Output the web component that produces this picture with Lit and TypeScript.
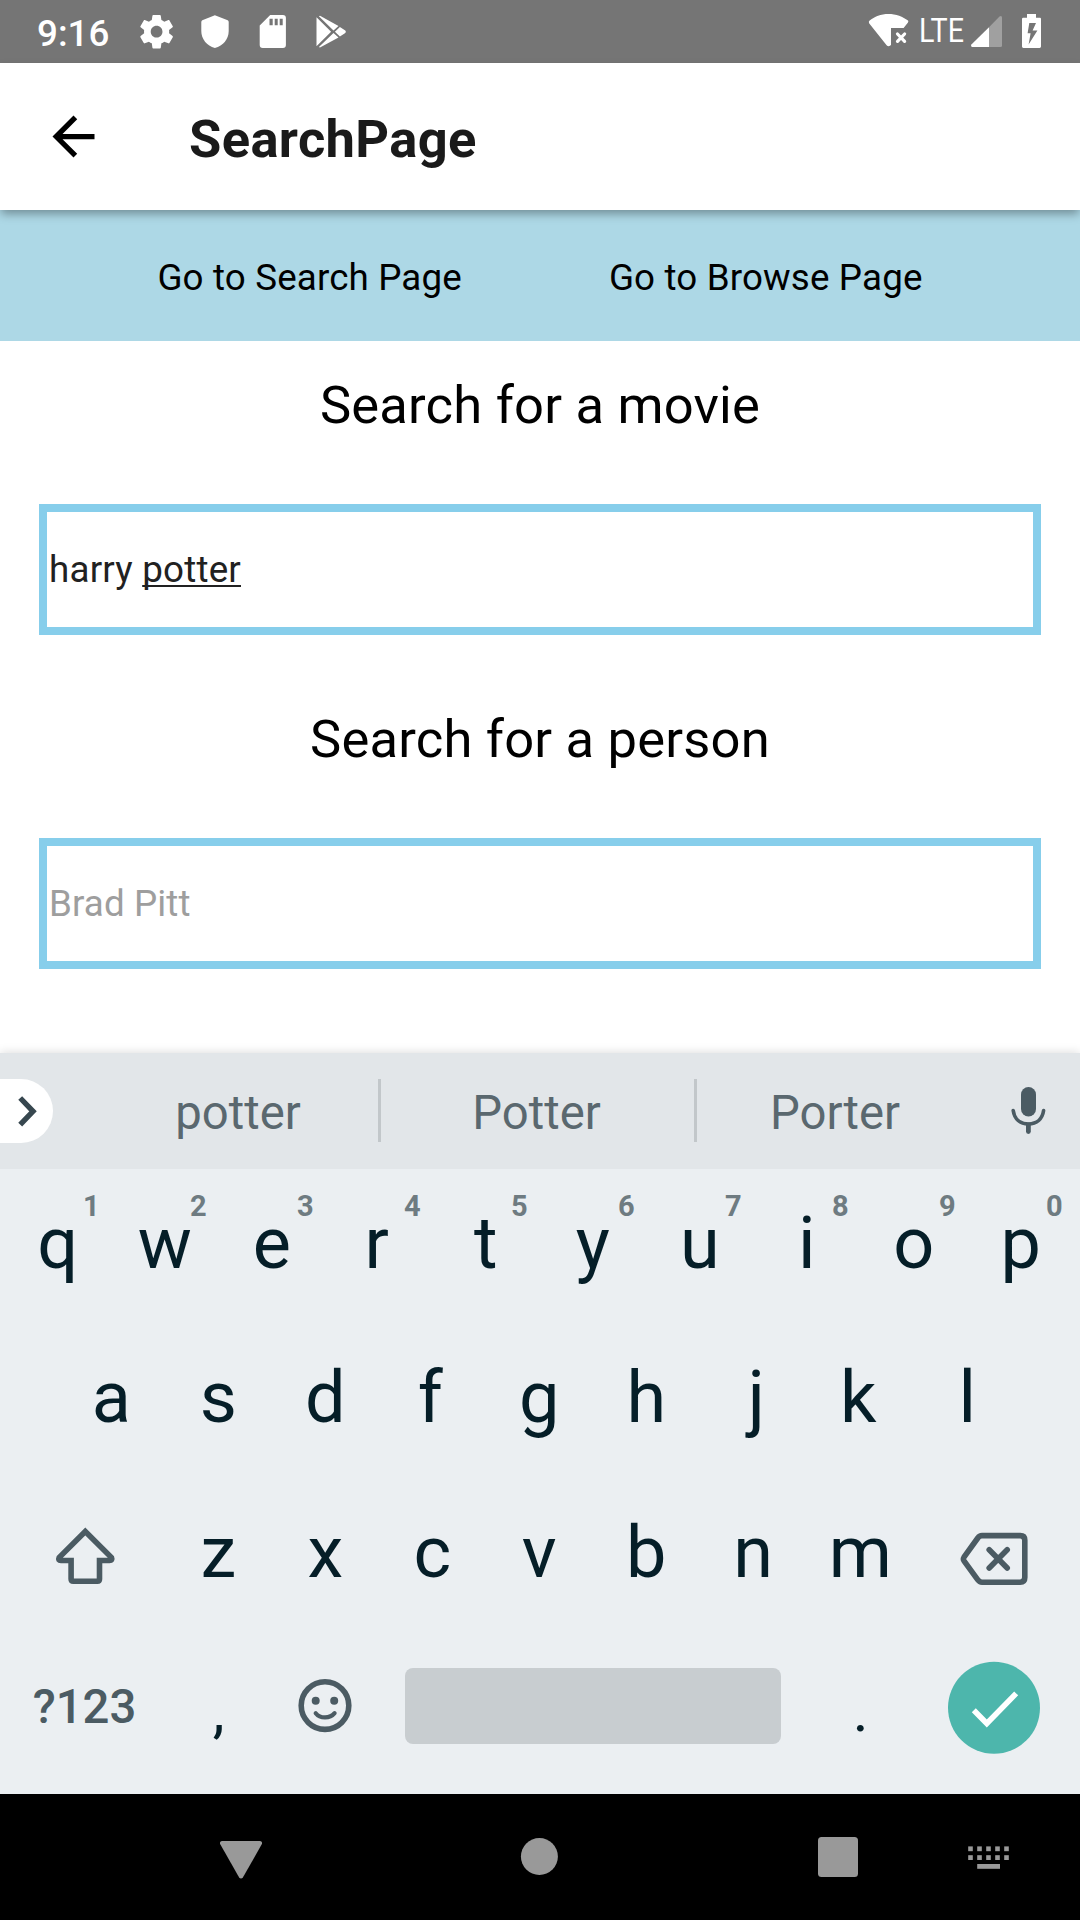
import { LitElement, html, css, svg, nothing } from "lit";
import { customElement, property } from "lit/decorators.js";

const GEAR =
  "M19.43 12.98c.04-.32.07-.64.07-.98s-.03-.66-.07-.98l2.11-1.65c.19-.15.24-.42.12-.64l-2-3.46c-.12-.22-.39-.3-.61-.22l-2.49 1c-.52-.4-1.08-.73-1.69-.98l-.38-2.65C14.46 2.18 14.25 2 14 2h-4c-.25 0-.46.18-.49.42l-.38 2.65c-.61.25-1.17.59-1.69.98l-2.49-1c-.23-.09-.49 0-.61.22l-2 3.46c-.13.22-.07.49.12.64l2.11 1.65c-.04.32-.07.65-.07.98s.03.66.07.98l-2.11 1.65c-.19.15-.24.42-.12.64l2 3.46c.12.22.39.3.61.22l2.49-1c.52.4 1.08.73 1.69.98l.38 2.65c.03.24.24.42.49.42h4c.25 0 .46-.18.49-.42l.38-2.65c.61-.25 1.17-.59 1.69-.98l2.49 1c.23.09.49 0 .61-.22l2-3.46c.12-.22.07-.49-.12-.64l-2.11-1.65zM12 15.5c-1.93 0-3.5-1.57-3.5-3.5s1.57-3.5 3.5-3.5 3.5 1.57 3.5 3.5-1.57 3.5-3.5 3.5z";

@customElement("status-bar")
export class StatusBar extends LitElement {
  static styles = css`
    :host {
      display: flex;
      align-items: center;
      height: 63px;
      padding: 0 38px 0 37px;
      background: #757575;
      color: #fff;
      box-sizing: border-box;
    }
    .time {
      width: 103px;
      padding-top: 4px;
      font-size: 36.75px;
      line-height: 42px;
      font-weight: 500;
    }
    .group {
      display: flex;
    }
    .notices {
      gap: 28px;
    }
    .system {
      margin-left: auto;
    }
    .network {
      margin: 0 3px 0 7px;
    }
    .battery {
      margin-left: 18px;
    }
    svg {
      display: block;
      overflow: visible;
    }
    .lte {
      font-size: 32.5px;
      font-weight: 400;
    }
  `;

  render() {
    return html`
      <span class="time">9:16</span>
      <div class="group notices">
        <svg width="33" height="63" viewBox="140.3 0 33 63" fill="#fff">
          <path transform="translate(136.8 11.6) scale(1.675)" d=${GEAR} />
        </svg>
        <svg width="28" height="63" viewBox="201.3 0 28 63" fill="#fff">
          <path d="M215.2 15.3 L228 20.2 Q229 20.8 229 22 V31 C229 39 223.5 45.8 215.2 48 C207 45.8 201.6 39 201.6 31 V22 Q201.6 20.8 202.6 20.2 Z" />
        </svg>
        <svg width="30" height="63" viewBox="257.3 0 30 63" fill="#fff">
          <path fill-rule="evenodd" d="M270.5 15 H283.2 Q286.2 15 286.2 18 V45 Q286.2 48 283.2 48 H263 Q260 48 260 45 V25.5 Z M269.8 18.7 V25.3 H273 V18.7 Z M275 18.7 V25.3 H278 V18.7 Z M280 18.7 V25.3 H283 V18.7 Z" />
        </svg>
        <svg width="31" height="63" viewBox="315.3 0 31 63" fill="#fff">
          <path d="M316.8 17.2 L331.4 31.7 L316.8 46.2 Z M319.2 16.3 L320.3 15.8 L338.8 26 L333.8 30.5 Z M333.8 33 L338.8 37.4 L320.3 47.6 L319.2 47.1 Z M340.2 27 L345.6 30.4 Q346.8 31.7 345.6 33 L340.2 36.4 L335.2 31.7 Z" />
        </svg>
      </div>
      <div class="group system">
        <svg width="41" height="63" viewBox="868 0 41 63" fill="#fff">
          <path d="M888.4 14 C896 14 903 16.6 908 20.6 Q908.7 21.4 908 22.4 L903.6 28 H891 V45 C889.8 46.6 887.6 46.4 886.6 45.2 L869.1 23.2 Q868.4 21.6 869.4 20.8 C874.5 16.4 881 14 888.4 14 Z" />
          <path d="M897.5 34 L904.6 41.4 M904.6 34 L897.5 41.4" stroke="#fff" stroke-width="3.2" stroke-linecap="round" />
        </svg>
        <svg class="network" width="51" height="63" viewBox="916 0 51 63" fill="#fff">
          <text class="lte" x="919" y="42.3" textLength="45" lengthAdjust="spacingAndGlyphs">LTE</text>
        </svg>
        <svg width="33" height="63" viewBox="970 0 33 63">
          <path d="M989 27.2 L999.5 16.4 Q1002 15.2 1002 17.5 V45.5 Q1002 47 1000.5 47 H989 Z" fill="#a0a0a0" />
          <path d="M989 27.2 V47 H972 Q970.2 46.4 971.4 44.6 Z" fill="#fff" />
        </svg>
        <svg class="battery" width="21" height="63" viewBox="1021 0 21 63" fill="#fff">
          <path fill-rule="evenodd" d="M1027 14 H1036 V17.7 H1040 Q1041 17.7 1041 18.9 V46.6 Q1041 48 1039.6 48 H1023.4 Q1022 48 1022 46.6 V18.9 Q1022 17.7 1023.2 17.7 H1027 Z M1029.3 23 L1027.6 33.2 H1030.6 L1028.6 44.5 L1037.4 30.6 H1032.6 L1036 23 Z" />
        </svg>
      </div>
    `;
  }
}

@customElement("search-field")
export class SearchField extends LitElement {
  @property() heading = "";
  @property() placeholder = "";
  @property() committed = "";
  @property() composing = "";

  static styles = css`
    :host {
      display: flex;
      flex-direction: column;
    }
    .heading {
      margin: -1px 0 34px;
      font-size: 52.5px;
      line-height: 130px;
      font-weight: 400;
      letter-spacing: 0.2px;
      text-align: center;
      color: #000;
    }
    .box {
      box-sizing: border-box;
      height: 131px;
      margin: 0 39px;
      padding-left: 2px;
      border: 8px solid #87ceeb;
      font-size: 36.75px;
      line-height: 115px;
      letter-spacing: 0.2px;
      color: #212121;
      white-space: pre;
    }
    .placeholder {
      letter-spacing: 0.1px;
      color: #9e9e9e;
    }
    .composing {
      text-decoration: underline;
      text-decoration-thickness: 2px;
      text-underline-offset: 3px;
      text-decoration-skip-ink: none;
    }
  `;

  render() {
    return html`
      <h2 class="heading">${this.heading}</h2>
      <div class="box">${this.committed
        ? html`${this.committed} <span class="composing">${this.composing}</span>`
        : html`<span class="placeholder">${this.placeholder}</span>`}</div>
    `;
  }
}

/* Narrow letters whose ink sits slightly off the centre of the key. */
const LEAN: Record<string, string> = { r: "lean-left", f: "lean-left", k: "lean-left", j: "lean-right" };

@customElement("soft-keyboard")
export class SoftKeyboard extends LitElement {
  static styles = css`
    :host {
      display: flex;
      flex-direction: column;
      height: 741px;
      background: #ebeff2;
      box-shadow: 0 -1px 9px rgba(0, 0, 0, 0.13);
    }
    .strip {
      display: flex;
      align-items: center;
      height: 116px;
      background: #e2e6e9;
    }
    .expand {
      display: block;
      width: 53px;
      height: 64px;
      margin-right: 45px;
      border-radius: 0 32px 32px 0;
      background: #fff;
    }
    .word {
      box-sizing: border-box;
      padding-top: 4px;
      font-size: 47.25px;
      line-height: 60px;
      text-align: center;
      color: #5a686f;
    }
    .first {
      width: 280px;
    }
    .second {
      width: 313px;
      padding-right: 2px;
    }
    .third {
      width: 276px;
    }
    .rule {
      width: 3px;
      height: 63px;
      margin-bottom: 2px;
      background: #c2c7ca;
    }
    .mic {
      display: block;
      margin-left: 35px;
    }
    .row {
      display: flex;
      justify-content: center;
      height: 154.5px;
      padding-right: 1.5px;
    }
    .key {
      position: relative;
      box-sizing: border-box;
      display: flex;
      align-items: center;
      justify-content: center;
      width: 107px;
      padding-bottom: 5px;
      font-size: 72px;
      line-height: 84px;
      color: #051e28;
    }
    .lean-left {
      padding-right: 4px;
    }
    .lean-right {
      padding-left: 6px;
    }
    .mark {
      padding: 3px 0 0 1px;
      font-size: 60px;
    }
    .wide {
      width: 160.5px;
    }
    .symbols {
      font-size: 47.25px;
      font-weight: 500;
      color: #4b5b63;
    }
    .space {
      width: 428px;
    }
    .bar {
      width: 376px;
      height: 76px;
      margin-bottom: 2px;
      border-radius: 8px;
      background: #c8cdd0;
    }
    .hint {
      position: absolute;
      left: 72px;
      top: 20px;
      width: 30px;
      font-size: 29px;
      line-height: 34px;
      font-weight: 700;
      text-align: center;
      color: #6e7b81;
    }
    .icon {
      display: block;
      width: 100px;
      height: 100px;
    }
  `;

  private key(label: string, hint = "", variant = LEAN[label] ?? "") {
    return html`<div class="key ${variant}">${label}${hint ? html`<span class="hint">${hint}</span>` : nothing}</div>`;
  }

  private icon(body: unknown) {
    return html`<svg class="icon" viewBox="-50 -50 100 100" fill="none" stroke="#4b5b63" stroke-width="5.6" stroke-linejoin="round" stroke-linecap="round">${body}</svg>`;
  }

  render() {
    return html`
      <div class="strip">
        <svg class="expand" viewBox="0 0 53 64">
          <path d="M20.2 19 L33 32.3 L20.2 45.6" fill="none" stroke="#37474f" stroke-width="5.4" />
        </svg>
        <span class="word first">potter</span>
        <span class="rule"></span>
        <span class="word second">Potter</span>
        <span class="rule"></span>
        <span class="word third">Porter</span>
        <svg class="mic" width="40" height="116" viewBox="1008 1053 40 116" fill="none" stroke="#4b5b63" stroke-linecap="round">
          <rect x="1021" y="1087" width="15" height="29.5" rx="7.5" fill="#4b5b63" stroke="none" />
          <path d="M1013.2 1110.6 C1014.4 1119 1020 1124 1028.4 1124 C1036.8 1124 1042.4 1119 1043.6 1110.6" stroke-width="3.6" />
          <path d="M1028.4 1125 V1131.5" stroke-width="4.8" />
        </svg>
      </div>
      <div class="row">${[..."qwertyuiop"].map((c, i) => this.key(c, String((i + 1) % 10)))}</div>
      <div class="row">${[..."asdfghjkl"].map((c) => this.key(c))}</div>
      <div class="row">
        <div class="key wide">
          ${this.icon(svg`<path stroke-linejoin="miter" d="M.3 -21.5 L26.5 4.6 Q27.8 7.5 24.5 7.5 H14.5 V26 Q14.5 28.2 12.3 28.2 H-11.7 Q-13.9 28.2 -13.9 26 V7.5 H-24 Q-27.3 7.5 -25.9 4.6 Z" />`)}
        </div>
        ${[..."zxcvbnm"].map((c) => this.key(c))}
        <div class="key wide">
          ${this.icon(svg`
            <path d="M-12 -17.4 H26.2 Q30.8 -17.4 30.8 -12.8 V24.6 Q30.8 29.2 26.2 29.2 H-12 Q-14.6 29.2 -16.2 26.8 L-30 7.8 Q-31.2 6 -30 4.2 L-16.2 -15 Q-14.6 -17.4 -12 -17.4 Z" />
            <path d="M-4.8 -3.2 L13.2 15 M13.2 -3.2 L-4.8 15" />`)}
        </div>
      </div>
      <div class="row">
        <div class="key wide symbols">?123</div>
        ${this.key(",", "", "mark")}
        <div class="key">
          ${this.icon(svg`
            <circle cx="0" cy="-1.4" r="23.8" />
            <circle cx="-9.3" cy="-6.2" r="4" fill="#4b5b63" stroke="none" />
            <circle cx="9.2" cy="-6.2" r="4" fill="#4b5b63" stroke="none" />
            <path stroke-width="4.2" d="M-9.3 6.2 C-5 11.8 5 11.8 9.6 6.2" />`)}
        </div>
        <div class="key space"><div class="bar"></div></div>
        ${this.key(".", "", "mark")}
        <div class="key wide">
          ${this.icon(svg`
            <circle cx="0" cy=".8" r="46" fill="#4db6ac" stroke="none" />
            <path stroke="#fff" stroke-linecap="butt" stroke-linejoin="miter" d="M-20.2 3.2 L-7.2 16.4 L22.2 -13.6" />`)}
        </div>
      </div>
    `;
  }
}

@customElement("app-root")
export class AppRoot extends LitElement {
  static styles = css`
    :host {
      display: flex;
      flex-direction: column;
      width: 1080px;
      height: 1920px;
      overflow: hidden;
      background: #fff;
      font-family: Roboto, "Liberation Sans", sans-serif;
    }
    .appbar {
      position: relative;
      display: flex;
      align-items: center;
      box-sizing: border-box;
      height: 147px;
      padding-left: 42px;
      background: #fff;
      box-shadow: 0 5px 9px -1px rgba(0, 0, 0, 0.34);
    }
    .back {
      display: block;
      width: 63px;
      height: 63px;
    }
    .title {
      margin: 0 0 0 84px;
      padding-top: 4px;
      font-size: 52.5px;
      line-height: 62px;
      font-weight: 700;
      letter-spacing: 0.35px;
      color: #1a1a1a;
    }
    .links {
      display: flex;
      align-items: center;
      justify-content: center;
      gap: 147px;
      box-sizing: border-box;
      height: 131px;
      padding-top: 4px;
      background: #add8e6;
      font-size: 36.75px;
      letter-spacing: 0.15px;
      color: #000;
    }
    .fields {
      display: flex;
      flex-direction: column;
      flex: 1;
      gap: 40px;
    }
    .nav {
      display: flex;
      box-sizing: border-box;
      height: 126px;
      padding-left: 220px;
      background: #000;
    }
    .home {
      margin: 0 259px 0 258px;
    }
    .switcher {
      margin-left: 109px;
    }
  `;

  render() {
    const dots = [0, 1].flatMap((r) => [0, 1, 2, 3, 4].map((c) => [968.2 + c * 9, 1846.4 + r * 8.8]));
    return html`
      <status-bar></status-bar>
      <header class="appbar">
        <svg class="back" viewBox="0 0 24 24">
          <path d="M20 11H7.83l5.59-5.59L12 4l-8 8 8 8 1.41-1.41L7.83 13H20v-2z" />
        </svg>
        <h1 class="title">SearchPage</h1>
      </header>
      <nav class="links">
        <span>Go to Search Page</span>
        <span>Go to Browse Page</span>
      </nav>
      <main class="fields">
        <search-field heading="Search for a movie" committed="harry" composing="potter"></search-field>
        <search-field heading="Search for a person" placeholder="Brad Pitt"></search-field>
      </main>
      <soft-keyboard></soft-keyboard>
      <footer class="nav">
        <svg width="42" height="126" viewBox="220 1794 42 126" fill="#999">
          <path d="M222 1841 H260 Q263 1841.6 261.6 1844.6 L243 1877.2 Q241 1879.6 239 1877.2 L220.4 1844.6 Q219 1841.6 222 1841 Z" />
        </svg>
        <svg class="home" width="39" height="126" viewBox="520 1794 39 126" fill="#999">
          <circle cx="539.4" cy="1856.5" r="18.5" />
        </svg>
        <svg width="40" height="126" viewBox="818 1794 40 126" fill="#999">
          <rect x="818" y="1837" width="40" height="40" rx="3.5" />
        </svg>
        <svg class="switcher" width="42" height="126" viewBox="967 1794 42 126" fill="#999">
          ${dots.map(([x, y]) => svg`<rect x=${x} y=${y} width="4.6" height="4.8" />`)}
          <rect x="977.2" y="1864" width="22.8" height="4.8" />
        </svg>
      </footer>
    `;
  }
}
